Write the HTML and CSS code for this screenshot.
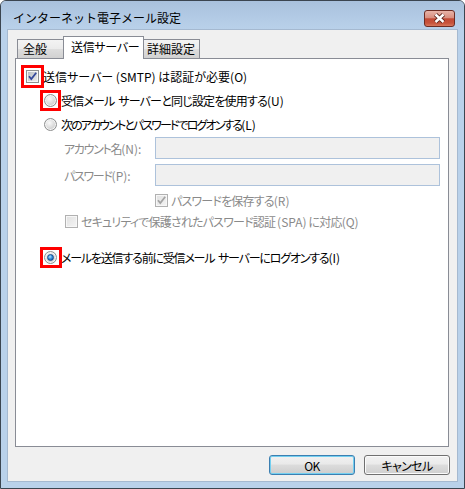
FILE: index.html
```html
<!DOCTYPE html>
<html lang="ja">
<head>
    <meta charset="UTF-8">
    <title>インターネット電子メール設定</title>
    <link rel="stylesheet" href="styles.css">
</head>
<body>
    <div class="window">
        <!-- タイトルバー -->
        <div class="titlebar">
            <span class="title">インターネット電子メール設定</span>
            <span class="close-btn">
                <svg width="29" height="15" viewBox="0 0 29 15">
                    <path d="M10.5 3.5 L18.5 11 M18.5 3.5 L10.5 11" stroke="#5a2219" stroke-width="4.4" fill="none"/>
                    <path d="M10.5 3.5 L18.5 11 M18.5 3.5 L10.5 11" stroke="#fff" stroke-width="2.4" fill="none"/>
                </svg>
            </span>
        </div>

        <div class="client">
            <!-- タブ -->
            <div class="tabs">
                <div class="tab tab-general">全般</div>
                <div class="tab tab-send active">送信サーバー</div>
                <div class="tab tab-detail">詳細設定</div>
            </div>

            <!-- 送信サーバー タブの中身 -->
            <div class="panel">
                <div class="row row-auth">
                    <span class="mark mark-check">
                        <span class="check">
                            <svg width="11" height="11" viewBox="0 0 11 11"><path d="M2 5.2 L4.3 8 L9.2 1.8" stroke="#34489a" stroke-width="1.8" fill="none"/></svg>
                        </span>
                    </span>
                    <span class="label">送信サーバー (SMTP) は認証が必要(O)</span>
                </div>
                <div class="row row-radio">
                    <span class="mark"><span class="radio"></span></span>
                    <span class="label ls-s">受信メール<span class="sp"> </span>サーバーと同じ設定を使用する<span class="key">(U)</span></span>
                </div>
                <div class="row row-radio">
                    <span class="radio"></span>
                    <span class="label ls-l">次のアカウントとパスワードでログオンする<span class="key">(L)</span></span>
                </div>
                <div class="field field-account">
                    <span class="field-label">アカウント名<span class="key">(N):</span></span>
                    <span class="textbox"></span>
                </div>
                <div class="field field-password">
                    <span class="field-label">パスワード<span class="key">(P):</span></span>
                    <span class="textbox"></span>
                </div>
                <div class="row row-save">
                    <span class="check disabled">
                        <svg width="11" height="11" viewBox="0 0 11 11"><path d="M2 5.2 L4.3 8 L9.2 1.8" stroke="#a4a4a4" stroke-width="1.8" fill="none"/></svg>
                    </span>
                    <span class="label dim ls-s">パスワードを保存する<span class="key">(R)</span></span>
                </div>
                <div class="row row-spa">
                    <span class="check disabled"></span>
                    <span class="label dim ls-s">セキュリティで保護されたパスワード認証 <span class="key">(SPA)</span> に対応<span class="key">(Q)</span></span>
                </div>
                <div class="row row-radio row-before">
                    <span class="mark mark-wide"><span class="radio checked"></span></span>
                    <span class="label ls-m">メールを送信する前に受信メール<span class="sp"> </span>サーバーにログオンする<span class="key">(I)</span></span>
                </div>
            </div>

            <!-- ボタン -->
            <div class="actions">
                <button class="btn default">OK</button>
                <button class="btn">キャンセル</button>
            </div>
        </div>
    </div>
</body>
</html>
```

FILE: styles.css
```css
body {
    margin: 0;
    background: #fff;
    font-family: "Noto Sans CJK JP", sans-serif;
    font-size: 12px;
    color: #000;
}
.window {
    width: 465px;
    height: 489px;
    box-sizing: border-box;
    border: 1px solid #3b4550;
    border-radius: 6px 6px 0 0;
    background: #b9d1ea;
    display: flex;
    flex-direction: column;
}
.titlebar {
    height: 28px;
    flex: none;
    box-sizing: border-box;
    padding: 9px 9px 0 12px;
    display: flex;
    align-items: flex-start;
    justify-content: space-between;
    background: linear-gradient(#a9c1dd, #b9d1ea);
    border-radius: 5px 5px 0 0;
}
.title {
    line-height: 16px;
}
.close-btn {
    width: 31px;
    height: 17px;
    box-sizing: border-box;
    border: 1px solid #6d2c23;
    border-radius: 3px;
    background: linear-gradient(#e8b4a8, #d98f80 45%, #c24a35 52%, #c7533b 80%, #d8775c);
    display: flex;
}
.client {
    flex: 1;
    margin: 0 6px 6px;
    border: 1px solid #a5b9d0;
    background: #f0f0f0;
    display: flex;
    flex-direction: column;
}

/* タブ */
.tabs {
    height: 28px;
    flex: none;
    box-sizing: border-box;
    padding-left: 9px;
    display: flex;
    align-items: flex-end;
}
.tab {
    height: 19px;
    box-sizing: border-box;
    border: 1px solid #898c95;
    border-bottom: none;
    margin-right: -1px;
    line-height: 18px;
    white-space: nowrap;
    font-feature-settings: "palt";
    background: linear-gradient(#f3f3f3, #ebebeb 50%, #dedede 50%, #d1d1d1);
}
.tab-general {
    width: 47px;
    padding-left: 5px;
}
.tab-send {
    width: 81px;
    padding-left: 7px;
    letter-spacing: -0.3px;
}
.tab-detail {
    width: 57px;
    padding-left: 3px;
}
.tab.active {
    height: 23px;
    margin-bottom: -1px;
    line-height: 20px;
    background: #fff;
    position: relative;
    z-index: 1;
}

/* パネル */
.panel {
    flex: none;
    width: 434px;
    height: 389px;
    margin-left: 7px;
    box-sizing: border-box;
    border: 1px solid #898c95;
    background: #fff;
    padding: 5px 0 0 10px;
}
.row {
    display: flex;
    align-items: center;
    height: 24px;
}
.label {
    font-feature-settings: "palt";
    white-space: nowrap;
}
/* Meiryo UI の詰まったかなに近づける */
.ls-s {
    letter-spacing: -0.8px;
}
.ls-m {
    letter-spacing: -1.2px;
}
.ls-l {
    letter-spacing: -1.9px;
}
.key {
    letter-spacing: 0;
}
.sp {
    letter-spacing: 0;
    padding-right: 1px;
}
.dim {
    color: #8a8a8a;
}
.row-auth .mark {
    margin-right: 4px;
}
.row-radio {
    padding-left: 18px;
}
.row-radio > .radio,
.row-radio > .mark {
    margin-right: 4px;
}
.row-save {
    height: 20px;
    margin-top: 4px;
    padding-left: 129px;
}
.row-spa {
    height: 20px;
    margin-top: 1px;
    padding-left: 39px;
}
.row-save .check,
.row-spa .check {
    margin-right: 3px;
}
.row-before {
    margin-top: 14px;
}

.field {
    display: flex;
    align-items: center;
    height: 22px;
    padding-left: 38px;
}
.field-account {
    margin-top: 1px;
}
.field-password {
    margin-top: 5px;
}
.field-label {
    width: 91px;
    color: #8a8a8a;
    font-feature-settings: "palt";
    letter-spacing: -1.3px;
    white-space: nowrap;
}
.textbox {
    width: 285px;
    height: 22px;
    box-sizing: border-box;
    border: 1px solid #adc2db;
    background: #f0f0f0;
}

/* チェックボックス */
.check {
    flex: none;
    width: 13px;
    height: 13px;
    box-sizing: border-box;
    border: 1px solid #8e8f8f;
    padding: 1px;
    background: linear-gradient(135deg, #b8bdc3, #ececed) content-box, #f6f6f6;
    position: relative;
}
.check svg {
    position: absolute;
    left: 0;
    top: 0;
}
.check.disabled {
    border-color: #b1b1b1;
    background: linear-gradient(135deg, #e2e2e2, #f3f3f3) content-box, #f7f7f7;
}

/* ラジオボタン */
.radio {
    flex: none;
    width: 13px;
    height: 13px;
    box-sizing: border-box;
    border: 1px solid #8e8f8f;
    border-radius: 50%;
    background: radial-gradient(circle at 40% 35%, #fafafa, #d8d8d8 55%, #bdbdbd);
    box-shadow: inset 0 0 0 1px #f5f5f5;
    display: flex;
    align-items: center;
    justify-content: center;
}
.radio.checked::after {
    content: "";
    width: 7px;
    height: 7px;
    box-sizing: border-box;
    border-radius: 50%;
    border: 1px solid #164a8c;
    background: radial-gradient(circle at 40% 35%, #b6e4ff, #3a93db 45%, #0c4b94);
}

/* 注釈の赤枠 */
.mark {
    display: flex;
    outline: 3px solid #f00;
    outline-offset: 1px;
}
.mark-check {
    outline-offset: 2px;
}
.mark-wide {
    padding-right: 1px;
}
.row-radio > .mark-wide {
    margin-right: 3px;
}

/* ボタン */
.actions {
    display: flex;
    justify-content: flex-end;
    gap: 9px;
    margin: 8px 7px 0 0;
}
.btn {
    width: 86px;
    height: 20px;
    box-sizing: border-box;
    border: 1px solid #707070;
    border-radius: 3px;
    padding: 0;
    font-family: inherit;
    font-size: 12px;
    color: #000;
    font-feature-settings: "palt";
    letter-spacing: -0.6px;
    background: linear-gradient(#f2f2f2, #ebebeb 45%, #dddddd 50%, #cfcfcf);
    box-shadow: inset 0 0 0 1px #fbfbfb;
}
.btn.default {
    border-color: #3c7fb1;
    box-shadow: inset 0 0 0 1px #73cff0;
    background: linear-gradient(#f1f1f1, #e9e9e9 45%, #dcdcdc 50%, #cdcdcd);
}
```
